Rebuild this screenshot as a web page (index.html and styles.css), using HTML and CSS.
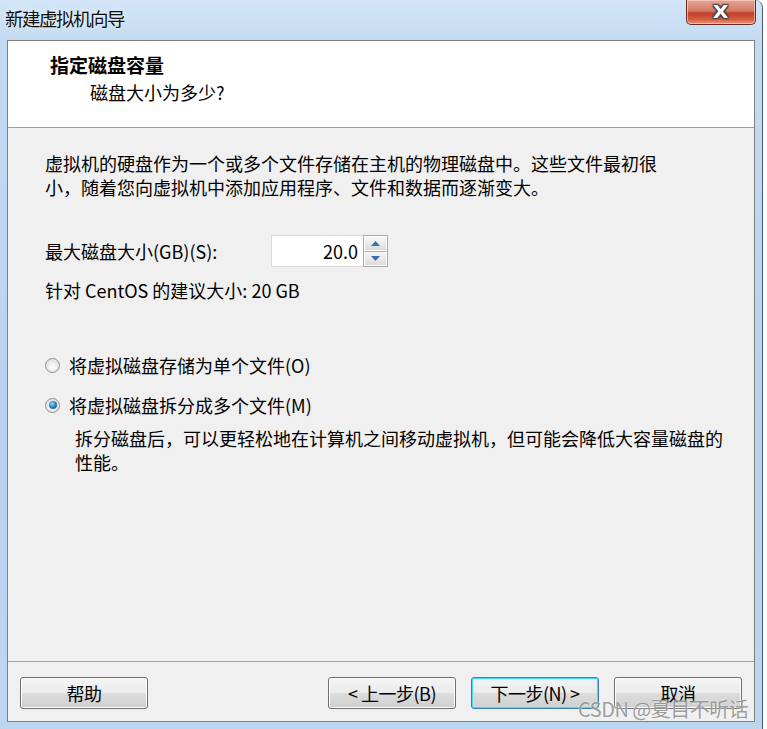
FILE: index.html
```html
<!DOCTYPE html>
<html lang="zh-CN">
<head>
<meta charset="utf-8">
<title>新建虚拟机向导</title>
<link rel="stylesheet" href="styles.css">
</head>
<body>
<div class="window">
  <div class="titlebar">
    <span class="title">新建虚拟机向导</span>
    <div class="close"><span class="close-x">X</span></div>
  </div>
  <div class="client">
    <div class="header">
      <div class="h-title">指定磁盘容量</div>
      <div class="h-sub">磁盘大小为多少?</div>
    </div>
    <div class="content">
      <p class="intro">虚拟机的硬盘作为一个或多个文件存储在主机的物理磁盘中。这些文件最初很<br>小，随着您向虚拟机中添加应用程序、文件和数据而逐渐变大。</p>
      <div class="size-row">
        <span class="label">最大磁盘大小(GB)(S):</span>
        <div class="spin">
          <div class="spin-input">20.0</div>
          <div class="spin-btns">
            <div class="spin-btn"><svg width="9" height="5" viewBox="0 0 9 5"><path d="M0 5 L4.5 0 L9 5 Z" fill="#3a6ea5"/></svg></div>
            <div class="spin-btn"><svg width="9" height="5" viewBox="0 0 9 5"><path d="M0 0 L4.5 5 L9 0 Z" fill="#3a6ea5"/></svg></div>
          </div>
        </div>
      </div>
      <p class="hint">针对 CentOS 的建议大小: 20 GB</p>
      <div class="radio-row first">
        <span class="radio"></span>
        <span class="r-label">将虚拟磁盘存储为单个文件(O)</span>
      </div>
      <div class="radio-row second">
        <span class="radio checked"><span class="dot"></span></span>
        <span class="r-label">将虚拟磁盘拆分成多个文件(M)</span>
      </div>
      <p class="desc">拆分磁盘后，可以更轻松地在计算机之间移动虚拟机，但可能会降低大容量磁盘的<br>性能。</p>
    </div>
    <div class="footer">
      <button class="btn">帮助</button>
      <div class="spacer"></div>
      <button class="btn">&lt; 上一步(B)</button>
      <button class="btn focus">下一步(N) &gt;</button>
      <button class="btn">取消</button>
    </div>
  </div>
  <div class="watermark">CSDN @夏目不听话</div>
</div>
</body>
</html>
```
FILE: styles.css
```css
* { box-sizing: border-box; }
html, body { margin: 0; padding: 0; }
body {
  width: 767px;
  height: 729px;
  overflow: hidden;
  background: #ffffff;
  font-family: "Noto Sans CJK SC", "Noto Sans", sans-serif;
  color: #000;
}
.window {
  position: relative;
  width: 763px;
  height: 729px;
  background: linear-gradient(to bottom, #d3e5f7 0px, #c3dbf2 40px, #b9d3ee 400px, #bcd6f0 729px);
  border-right: 1px solid #4a5b70;
  border-top-right-radius: 8px;
  display: flex;
  flex-direction: column;
  padding: 0 7px 7px 7px;
}
.titlebar {
  height: 40px;
  display: flex;
  align-items: flex-start;
  justify-content: space-between;
  flex-shrink: 0;
}
.title {
  font-size: 18.5px;
  line-height: 22px;
  margin-top: 7px;
  margin-left: -2px;
  color: #101010;
  letter-spacing: -1.5px;
  text-shadow: 0 0 6px rgba(255,255,255,0.9);
}
.close {
  width: 70px;
  height: 25px;
  margin-right: -1px;
  border: 1px solid #6b2a22;
  border-top: none;
  border-radius: 0 0 5px 5px;
  background: linear-gradient(to bottom, #e8a493 0%, #d47a68 45%, #c2402c 55%, #d45a3e 80%, #e9967c 100%);
  box-shadow: inset 0 0 0 1px rgba(255,220,210,0.6);
  display: flex;
  align-items: center;
  justify-content: center;
}
.close-x {
  font-family: "DejaVu Sans", sans-serif;
  font-weight: bold;
  font-size: 17px;
  line-height: 17px;
  color: #ffffff;
  text-shadow: 0 0 1px #333, 1px 1px 1px #444, -1px -1px 1px #444, 1px -1px 1px #444, -1px 1px 1px #444;
  transform: scaleX(1.2);
}
.client {
  flex: 1;
  border: 1px solid #808080;
  background: #f0f0f0;
  display: flex;
  flex-direction: column;
}
.header {
  height: 87px;
  background: #ffffff;
  border-bottom: 1px solid #a0a0a0;
  padding: 11px 0 0 42px;
  flex-shrink: 0;
}
.h-title {
  font-size: 19px;
  line-height: 26px;
  font-weight: bold;
}
.h-sub {
  font-size: 18px;
  line-height: 26px;
  margin-top: 1px;
  margin-left: 40px;
}
.content {
  flex: 1;
  padding: 23px 0 0 37px;
  font-size: 18px;
}
.intro {
  margin: 0;
  line-height: 24px;
}
.size-row {
  display: flex;
  align-items: center;
  margin-top: 36px;
  height: 32px;
}
.label {
  width: 226px;
  line-height: 24px;
}
.spin {
  display: flex;
  height: 32px;
}
.spin-input {
  width: 92px;
  height: 32px;
  background: #ffffff;
  border: 1px solid #d8d8d8;
  border-right: none;
  text-align: right;
  padding-right: 5px;
  line-height: 30px;
  font-size: 18px;
}
.spin-btns {
  width: 25px;
  height: 32px;
  display: flex;
  flex-direction: column;
  border: 1px solid #a8a8a8;
}
.spin-btn {
  flex: 1;
  display: flex;
  align-items: center;
  justify-content: center;
  background: linear-gradient(to bottom, #f7f7f7, #dcdcdc);
  border: 1px solid #ffffff;
}
.spin-btn + .spin-btn { border-top: 1px solid #b0b0b0; }
.hint {
  margin: 11px 0 0 0;
  line-height: 24px;
}
.radio-row {
  display: flex;
  align-items: center;
  height: 24px;
}
.radio-row.first { margin-top: 51px; }
.radio-row.second { margin-top: 16px; }
.radio {
  width: 15px;
  height: 15px;
  border-radius: 50%;
  border: 1px solid #8e8f8f;
  background: radial-gradient(circle at 50% 60%, #ffffff 0%, #f0f0f0 40%, #c4c4c4 100%);
  box-shadow: inset 0 0 0 1px #e8e8e8;
  display: flex;
  align-items: center;
  justify-content: center;
  margin-right: 9px;
}
.dot {
  width: 8px;
  height: 8px;
  border-radius: 50%;
  background: radial-gradient(circle at 40% 35%, #a6d8f7 0%, #2f86c6 45%, #0d3f72 100%);
}
.r-label { line-height: 24px; }
.desc {
  margin: 9px 0 0 30px;
  line-height: 24px;
}
.footer {
  height: 60px;
  flex-shrink: 0;
  border-top: 1px solid #a0a0a0;
  display: flex;
  align-items: flex-start;
  padding: 15px 12px 0 12px;
  gap: 15px;
}
.spacer { flex: 1; }
.btn {
  width: 128px;
  height: 32px;
  border: 1px solid #707070;
  border-radius: 3px;
  background: linear-gradient(to bottom, #f4f4f4 0%, #ebebeb 50%, #dddddd 51%, #cfcfcf 100%);
  box-shadow: inset 0 0 0 1px #fcfcfc;
  font-family: "Noto Sans CJK SC", "Noto Sans", sans-serif;
  font-size: 18px;
  line-height: 28px;
  color: #000;
  padding: 0;
  letter-spacing: -0.5px;
}
.btn.focus {
  border-color: #3c7fb1;
  box-shadow: inset 0 0 0 1px #48d8fb, inset 0 0 3px 1px #bfe8fa;
}
.watermark {
  position: absolute;
  left: 578px;
  top: 695px;
  font-family: "Noto Sans CJK SC", "Noto Sans", sans-serif;
  font-size: 20px;
  line-height: 28px;
  color: rgba(140,140,140,0.85);
  letter-spacing: -0.5px;
  text-shadow: 0 0 2px rgba(255,255,255,0.8);
}
```
